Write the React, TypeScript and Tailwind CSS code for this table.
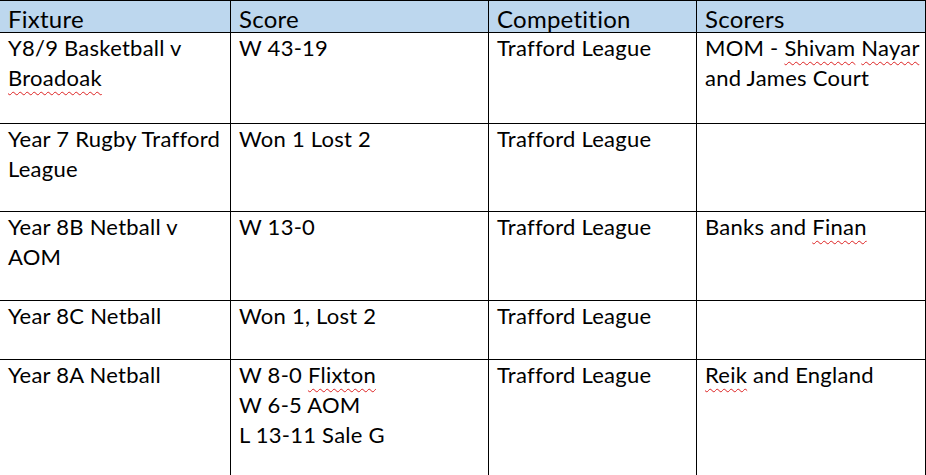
const Typo = ({ children }: { children: React.ReactNode }) => (
  <span className="underline decoration-wavy decoration-[#d22] decoration-1 underline-offset-[5px]">
    {children}
  </span>
);

type Row = {
  fixture: React.ReactNode;
  score: React.ReactNode;
  competition: string;
  scorers: React.ReactNode;
  height: string;
};

const rows: Row[] = [
  {
    fixture: (
      <>
        Y8/9 Basketball v <Typo>Broadoak</Typo>
      </>
    ),
    score: "W 43-19",
    competition: "Trafford League",
    scorers: (
      <>
        MOM - <Typo>Shivam</Typo> <Typo>Nayar</Typo> and James Court
      </>
    ),
    height: "h-[91px]",
  },
  {
    fixture: "Year 7 Rugby Trafford League",
    score: "Won 1 Lost 2",
    competition: "Trafford League",
    scorers: "",
    height: "h-[88px]",
  },
  {
    fixture: "Year 8B Netball v AOM",
    score: "W 13-0",
    competition: "Trafford League",
    scorers: (
      <>
        Banks and <Typo>Finan</Typo>
      </>
    ),
    height: "h-[89px]",
  },
  {
    fixture: "Year 8C Netball",
    score: "Won 1, Lost 2",
    competition: "Trafford League",
    scorers: "",
    height: "h-[59px]",
  },
  {
    fixture: "Year 8A Netball",
    score: (
      <>
        W 8-0 <Typo>Flixton</Typo>
        <br />
        W 6-5 AOM
        <br />
        L 13-11 Sale G
      </>
    ),
    competition: "Trafford League",
    scorers: (
      <>
        <Typo>Reik</Typo> and England
      </>
    ),
    height: "h-[120px]",
  },
];

const App = () => {
  const headers = ["Fixture", "Score", "Competition", "Scorers"];

  return (
    <div className="w-[926px] h-[475px] overflow-hidden bg-white text-black font-['Lato',sans-serif] text-[22px] tracking-[0.25px]">
      <div className="grid grid-cols-[230px_258px_208px_230px]">
        {/* Header */}
        {headers.map((h, i) => (
          <div
            key={h}
            className={`h-[33px] bg-[#bdd7ee] border-t border-b border-black pl-[8px] pt-[6px] text-[24px] leading-[24px] ${
              i > 0 ? "border-l" : ""
            } ${i === 3 ? "border-r" : ""}`}
          >
            {h}
          </div>
        ))}

        {/* Body */}
        {rows.map((r, ri) =>
          [r.fixture, r.score, r.competition, r.scorers].map((cell, ci) => (
            <div
              key={`${ri}-${ci}`}
              className={`${r.height} border-b border-black pl-[8px] leading-[30px] ${
                ci > 0 ? "border-l" : ""
              } ${ci === 3 ? "border-r" : ""}`}
            >
              {cell}
            </div>
          ))
        )}
      </div>
    </div>
  );
};

export default App;
